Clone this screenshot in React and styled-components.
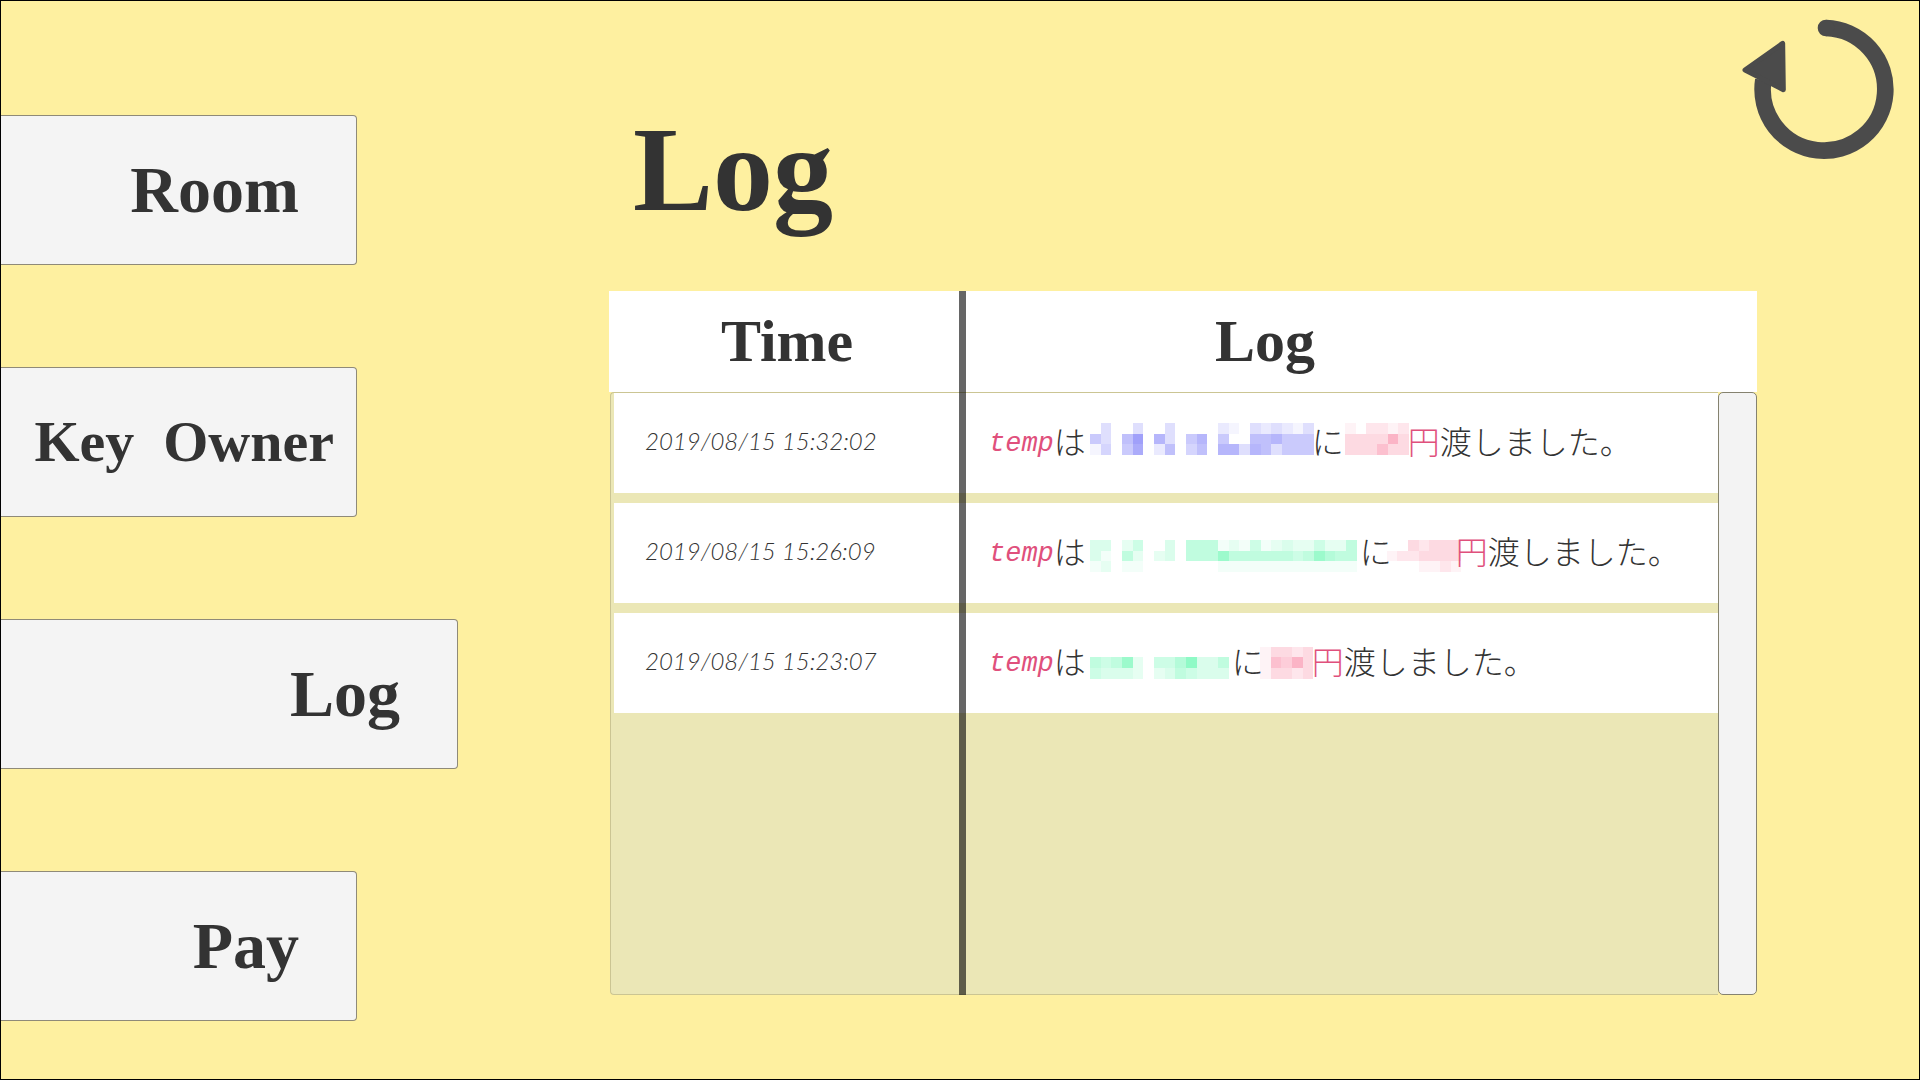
import React from "react";
import styled, { createGlobalStyle } from "styled-components";

const display = `"Liberation Serif", "Noto Sans CJK JP", serif`;
const body = `"Noto Sans CJK JP", sans-serif`;
const ink = "#333333";

const GlobalStyle = createGlobalStyle`
  *, *::before, *::after { box-sizing: border-box; }
  body { margin: 0; background: #fef0a0; }
`;

const Page = styled.div`
  min-height: 100vh;
  display: flex;
  gap: 151px;
  border: 1px solid #000;
  background: #fef0a0;
  color: ${ink};
`;

const Nav = styled.nav`
  flex: none;
  width: 457px;
  display: flex;
  flex-direction: column;
  align-items: flex-start;
  gap: 102px;
  padding-top: 114px;
`;

const NavButton = styled.button`
  width: ${(p) => (p.$active ? "457px" : "356px")};
  height: 150px;
  padding: 0 ${(p) => (p.$compact ? "22px" : "57px")} 0 0;
  border: 1px solid #8f8a78;
  border-left: 0;
  border-radius: 0 4px 4px 0;
  background: #f4f4f4;
  color: ${ink};
  font: bold ${(p) => (p.$compact ? "58px" : "66px")} / 76px ${display};
  text-align: right;
  white-space: pre;
  cursor: pointer;
`;

const Main = styled.main`
  flex: 1;
  min-width: 0;
  display: flex;
  flex-direction: column;
  padding: 17px 25px 84px 0;
`;

const Header = styled.header`
  height: 273px;
  display: flex;
  justify-content: space-between;
  align-items: flex-start;
`;

const Title = styled.h1`
  margin: 0;
  padding: 83px 0 0 24px;
  font: bold 120px / 138px ${display};
`;

const RefreshButton = styled.button`
  padding: 0;
  border: 0;
  background: none;
  color: #4b4b4b;
  cursor: pointer;
  svg { display: block; }
`;

const Panel = styled.section`
  position: relative;
  flex: 1;
  display: grid;
  grid-template: 101px 1fr / 1fr 39px;
  margin-right: 137px;

  &::after {
    content: "";
    position: absolute;
    top: 0;
    bottom: 0;
    left: 350px;
    width: 7px;
    background: rgba(0, 0, 0, 0.6);
  }
`;

const Table = styled.table`
  display: contents;
`;

const Head = styled.thead`
  display: block;
  grid-column: 1 / -1;
  background: #fff;
`;

const Rows = styled.tbody`
  display: flex;
  flex-direction: column;
  gap: 10px;
  margin-left: 1px;
  padding-left: 3px;
  border: 1px solid #cbc593;
  border-right: 0;
  border-radius: 4px 0 0 4px;
  background: #ebe7b6;
`;

const Row = styled.tr`
  display: grid;
  grid-template-columns: 349px 1fr;
  height: 100px;
  align-items: center;
  background: #fff;
`;

const HeadCell = styled.th`
  padding: 0 0 0 ${(p) => p.$indent};
  font: bold 60px / 70px ${display};
  text-align: left;
`;

const TimeCell = styled.td`
  padding: 0 0 4px 31px;
  font: italic 300 24px / 40px Lato, sans-serif;
`;

const LogCell = styled.td`
  display: flex;
  align-items: center;
  padding: 0 0 0 26px;
  font: 300 32px / 48px ${body};
  white-space: nowrap;
`;

const Name = styled.span`
  padding-top: 2px;
  color: #e0507c;
  font: italic 27px / 48px "Liberation Mono", monospace;
`;

const Words = styled.span`
  padding-bottom: 6px;
  color: ${(p) => (p.$accent ? "#e0507c" : ink)};
`;

const ScrollTrack = styled.div`
  border: 1px solid #85826f;
  border-radius: 5px;
  background: #f3f3f3;
`;

const Blocks = styled.svg`
  flex: none;
  display: block;
  overflow: visible;
`;

// Each digit is the strength of one block, a dot is an empty one.
function Mosaic({ width, color, x, y, rows }) {
  return (
    <Blocks width={width} height={40} viewBox={`0 0 ${width * 3} 120`} fill={color} shapeRendering="crispEdges" aria-hidden="true">
      {rows.map((row, r) =>
        [...row].map((level, c) =>
          level === "." ? null : (
            <rect key={`${r}-${c}`} x={x + c * 32} y={y + r * 32} width="32" height="32" opacity={level * 0.06} />
          )
        )
      )}
    </Blocks>
  );
}

const blue = "#5050f5";
const green = "#30f595";
const pink = "#f53060";

const entries = [
  {
    time: "2019/08/15 15:32:02",
    who: { width: 226, color: blue, x: 12, y: 0, rows: [".3..3..3....21.323213", "53.69.73.57.5..667555", "14.58.26.46.773763555"] },
    sum: { width: 64, color: pink, x: 3, y: 0, rows: ["1.2212", "333363", "333533"] },
  },
  {
    time: "2019/08/15 15:26:09",
    who: { width: 274, color: green, x: 12, y: 21, rows: ["33.24..3.5551214123224225", "31.52.23.5558555555458655", "12.11.......1111111111111"] },
    sum: { width: 64, color: pink, x: -16, y: 21, rows: ["..32333", "1223333", "...1121"] },
  },
  {
    time: "2019/08/15 15:23:07",
    who: { width: 146, color: green, x: 12, y: 43, rows: ["54582.4469335", "43332.2354333"] },
    sum: { width: 48, color: pink, x: -12, y: 11, rows: ["13323", "15463", "13323"] },
  },
];

const tabs = [
  { label: "Room" },
  { label: "Key  Owner", compact: true },
  { label: "Log", active: true },
  { label: "Pay" },
];

export default function App() {
  return (
    <>
      <GlobalStyle />
      <Page>
        <Nav>
          {tabs.map((t) => (
            <NavButton key={t.label} type="button" $compact={t.compact} $active={t.active} aria-current={t.active ? "page" : undefined}>
              {t.label}
            </NavButton>
          ))}
        </Nav>
        <Main>
          <Header>
            <Title>Log</Title>
            <RefreshButton type="button" aria-label="Refresh">
              <svg width="152" height="142" viewBox="66 54 456 426">
                <path d="M318 84A184 184 0 1 1 130 240" fill="none" stroke="currentColor" strokeWidth="50" />
                <circle cx="318" cy="84" r="25" fill="currentColor" />
                <path d="M75 210L188 130L190 269Z" fill="currentColor" stroke="currentColor" strokeWidth="15" strokeLinejoin="round" />
              </svg>
            </RefreshButton>
          </Header>
          <Panel>
            <Table>
              <Head>
                <Row>
                  <HeadCell $indent="112px">Time</HeadCell>
                  <HeadCell $indent="257px">Log</HeadCell>
                </Row>
              </Head>
              <Rows>
                {entries.map((e) => (
                  <Row key={e.time}>
                    <TimeCell>{e.time}</TimeCell>
                    <LogCell>
                      <Name>temp</Name>
                      <Words>は</Words>
                      <Mosaic {...e.who} />
                      <Words>に</Words>
                      <Mosaic {...e.sum} />
                      <Words $accent>円</Words>
                      <Words>渡しました。</Words>
                    </LogCell>
                  </Row>
                ))}
              </Rows>
            </Table>
            <ScrollTrack />
          </Panel>
        </Main>
      </Page>
    </>
  );
}
